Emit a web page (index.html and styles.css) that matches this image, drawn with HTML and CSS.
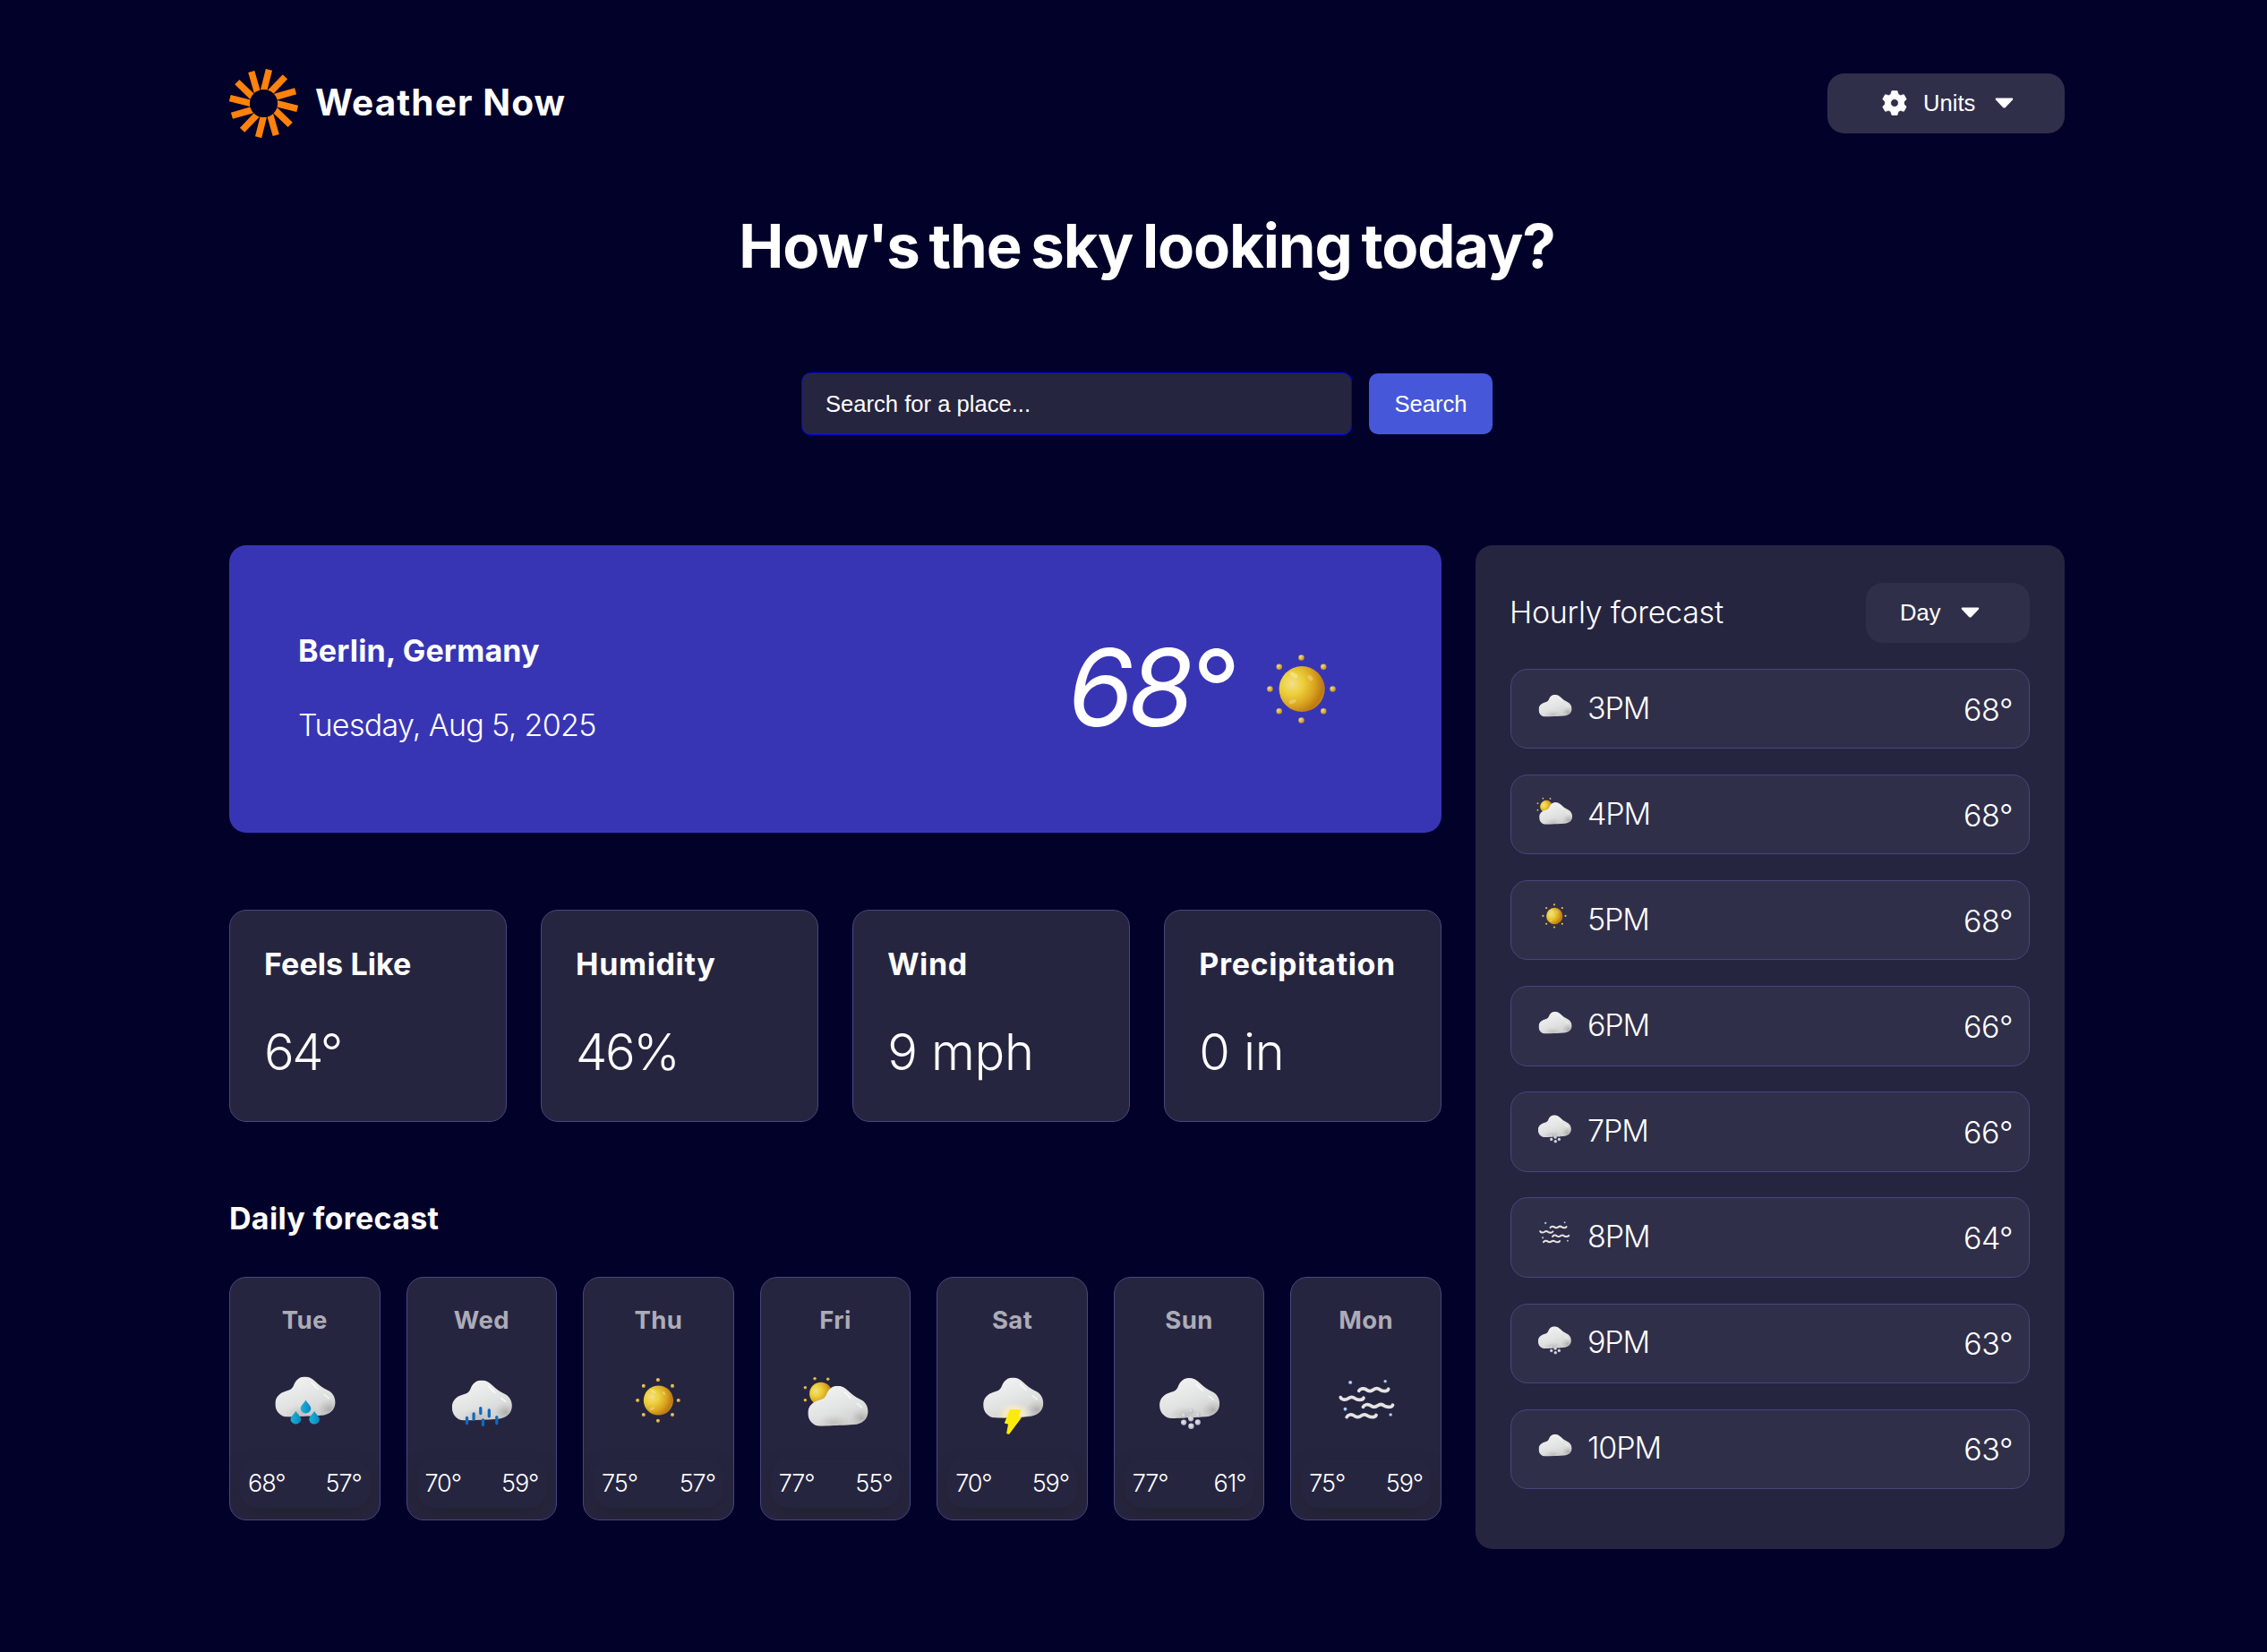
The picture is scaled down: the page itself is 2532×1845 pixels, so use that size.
FILE: index.html
```html
<!DOCTYPE html>
<html lang="en">
<head>
<meta charset="utf-8">
<title>Weather Now</title>
<link rel="stylesheet" href="styles.css">
</head>
<body>
<svg class="sprite" aria-hidden="true">
  <defs>
    <radialGradient id="g-sun" cx="0.28" cy="0.38" r="0.8">
      <stop offset="0" stop-color="#f3df88"/>
      <stop offset="0.3" stop-color="#ecd03c"/>
      <stop offset="0.62" stop-color="#d9a420"/>
      <stop offset="0.85" stop-color="#bd7a14"/>
      <stop offset="1" stop-color="#c98e1c"/>
    </radialGradient>
    <radialGradient id="g-dot" cx="0.35" cy="0.35" r="0.75">
      <stop offset="0" stop-color="#f2dd7c"/>
      <stop offset="1" stop-color="#b98712"/>
    </radialGradient>
    <linearGradient id="g-cloud" x1="0.2" y1="0" x2="0.7" y2="1">
      <stop offset="0" stop-color="#f5f5f5"/>
      <stop offset="0.55" stop-color="#e2e3e3"/>
      <stop offset="1" stop-color="#cbcbc9"/>
    </linearGradient>
    <radialGradient id="g-shade">
      <stop offset="0" stop-color="#a4a4a4" stop-opacity="0.8"/>
      <stop offset="1" stop-color="#bdbdbd" stop-opacity="0"/>
    </radialGradient>
    <radialGradient id="g-glow">
      <stop offset="0" stop-color="#fff0a0"/>
      <stop offset="0.5" stop-color="#fdf1c4" stop-opacity="0.8"/>
      <stop offset="1" stop-color="#f5efd8" stop-opacity="0"/>
    </radialGradient>
    <linearGradient id="g-drop" x1="0" y1="0" x2="1" y2="0">
      <stop offset="0" stop-color="#17b3dd"/>
      <stop offset="1" stop-color="#0f86bb"/>
    </linearGradient>
    <radialGradient id="g-snow" cx="0.4" cy="0.4" r="0.7">
      <stop offset="0" stop-color="#e6e8ee"/>
      <stop offset="1" stop-color="#a9acb8"/>
    </radialGradient>
    <radialGradient id="g-mist" cx="0.4" cy="0.4" r="0.7">
      <stop offset="0" stop-color="#c9e0fa"/>
      <stop offset="1" stop-color="#7ba3d6"/>
    </radialGradient>
    <clipPath id="c-cloud"><path d="M39.8 15C34 15 30 19 28 24C26.5 28 24 30 19.4 31C12 33 7.1 38 7.1 45.3C7.1 54 13 60 21 60C29 60 38 59 44 59C49 59 53 58.6 58 58.3C67.5 58 74.1 52 74.1 43.7C74.1 37.5 71 32.5 65.4 30C60 27.3 56 24.5 52 20.5C48 16.8 44.5 15 39.8 15Z"/></clipPath>
  </defs>
  <symbol id="cloud" viewBox="0 0 80 80" overflow="visible">
    <g clip-path="url(#c-cloud)">
      <rect x="5" y="13" width="72" height="50" fill="url(#g-cloud)"/>
      <ellipse cx="67" cy="51" rx="13" ry="11" fill="url(#g-shade)"/>
      <ellipse cx="36" cy="56" rx="18" ry="9" fill="url(#g-shade)" opacity="0.6"/>
      <path d="M48 22L55 29M62 35l5 4" stroke="#fff" stroke-width="1.6" stroke-linecap="round" opacity="0.75"/>
    </g>
  </symbol>
  <symbol id="i-sun" viewBox="0 0 80 80">
    <circle cx="40.4" cy="40" r="16.6" fill="url(#g-sun)"/>
    <ellipse cx="34.5" cy="29.8" rx="3.2" ry="1.6" transform="rotate(35 34.5 29.8)" fill="#fbf0b8" opacity="0.45"/>
    <ellipse cx="46.5" cy="32" rx="2.4" ry="1.4" transform="rotate(50 46.5 32)" fill="#fbf0b8" opacity="0.35"/>
    <ellipse cx="33.5" cy="49.2" rx="2.8" ry="1.5" transform="rotate(-20 33.5 49.2)" fill="#f8dfa0" opacity="0.45"/>
    <g fill="url(#g-dot)">
      <circle cx="40" cy="17.2" r="2.1"/><circle cx="40" cy="62.8" r="2.1"/>
      <circle cx="17.2" cy="40" r="2.1"/><circle cx="62.8" cy="40" r="2.1"/>
      <circle cx="23.9" cy="23.9" r="2.1"/><circle cx="56.1" cy="23.9" r="2.1"/>
      <circle cx="23.9" cy="56.1" r="2.1"/><circle cx="56.1" cy="56.1" r="2.1"/>
    </g>
  </symbol>
  <symbol id="i-overcast" viewBox="0 0 80 80">
    <use href="#cloud" x="1.2" y="4.5" width="80" height="80"/>
  </symbol>
  <symbol id="i-partly" viewBox="0 0 80 80">
    <circle cx="23.8" cy="32.4" r="12.7" fill="url(#g-sun)"/>
    <g fill="url(#g-dot)">
      <circle cx="17.1" cy="15.7" r="1.8"/><circle cx="31.8" cy="16.3" r="1.8"/>
      <circle cx="6.4" cy="25.7" r="1.8"/><circle cx="6.4" cy="39.7" r="1.8"/>
    </g>
    <use href="#cloud" x="2.3" y="8.7" width="80" height="80"/>
  </symbol>
  <symbol id="i-rain" viewBox="0 0 80 80">
    <use href="#cloud" x="0.3" y="-1.5" width="80" height="80"/>
    <g fill="url(#g-drop)">
      <path d="M41.5 39.5C43 43 47.3 45.5 47.3 49a5.8 5.4 0 0 1-11.6 0C35.7 45.5 40 43 41.5 39.5Z"/>
      <path d="M30.4 51.8C32 55.2 36.2 57.7 36.2 61.2a5.8 5.2 0 0 1-11.6 0C24.6 57.7 29 55.2 30.4 51.8Z"/>
      <path d="M51.1 51.8C52.6 55.2 56.9 57.7 56.9 61.2a5.8 5.2 0 0 1-11.6 0C45.3 57.7 49.6 55.2 51.1 51.8Z"/>
    </g>
  </symbol>
  <symbol id="i-drizzle" viewBox="0 0 80 80">
    <use href="#cloud" x="-0.3" y="2.4" width="80" height="80"/>
    <path d="M23.5 59.5v6M31.1 55v6.3M38.8 48.6v6M48.3 50.8v7M41.4 61.8v5.6M56.8 58.6v7" stroke="#1169bd" stroke-width="3.3" stroke-linecap="round"/>
  </symbol>
  <symbol id="i-storm" viewBox="0 0 80 80">
    <use href="#cloud" x="0.1" y="-0.5" width="80" height="80"/>
    <g clip-path="url(#c-cloud)"><ellipse cx="41" cy="56" rx="21" ry="14" fill="url(#g-glow)"/></g>
    <path d="M37.6 50.6L48.4 50.9L45.8 58.8L49 59.4L35.8 77L33.9 76.6L35.8 66.2L31.7 65Z" fill="#fdea0c" stroke="#fdea0c" stroke-width="1.4" stroke-linejoin="round"/>
  </symbol>
  <symbol id="i-snow" viewBox="0 0 80 80">
    <use href="#cloud" x="0" y="0" width="80" height="80"/>
    <g fill="url(#g-snow)">
      <circle cx="42.1" cy="51.7" r="2.8" opacity="0.8"/>
      <circle cx="34.1" cy="56.7" r="2.9" opacity="0.9"/><circle cx="49.8" cy="56.2" r="2.9" opacity="0.9"/>
      <circle cx="42.1" cy="60.3" r="3.1"/><circle cx="34.1" cy="64.6" r="3.1"/>
      <circle cx="49.8" cy="64.4" r="3.1"/><circle cx="42.4" cy="68.7" r="3.2"/>
    </g>
  </symbol>
  <symbol id="i-fog" viewBox="0 0 80 80">
    <g fill="none" stroke="#e6e4e2" stroke-width="3.7" stroke-linecap="round" stroke-linejoin="round">
      <path d="M31.8 29.3C33 26.6 37.5 26 40 28C42.5 30 45.5 30 48 28C50.5 26 53 26.2 55.3 28C58 30.2 63.8 30.2 64.6 27.4"/>
      <path d="M11.3 36.6C12.5 39.8 17.5 39.6 20 37.8C22.3 36 25 36 27.3 37.8C30.5 40 35.8 40 37 37.2"/>
      <path d="M36.5 47.3C37.7 44.4 42.2 43.8 44.8 45.8C47.3 47.8 50.2 47.8 52.8 45.8C55.2 44 57.8 44.2 60 46C62.8 48 68.6 48 69.5 45.2"/>
      <path d="M18.2 58.6C19.4 55.7 23.9 55.1 26.4 57.1C28.9 59.1 31.9 59.1 34.4 57.1C36.8 55.3 39.4 55.5 41.6 57.3C44.4 59.3 50.2 59.3 51 56.5"/>
    </g>
    <g fill="url(#g-mist)">
      <circle cx="22.2" cy="20" r="2.1"/><circle cx="61.2" cy="18.8" r="1.8"/>
      <circle cx="16.5" cy="49.7" r="2"/><circle cx="67.2" cy="56" r="1.8"/>
    </g>
  </symbol>
  <symbol id="caret" viewBox="0 0 20 12">
    <path d="M1.5 0.5h17c1.2 0 1.7 1.3 0.9 2.1L11.4 10.9a2 2 0 0 1-2.8 0L0.6 2.6C-0.2 1.8 0.3 0.5 1.5 0.5Z"/>
  </symbol>
</svg>

<div class="page">
  <header class="top">
    <div class="brand">
      <svg class="brand__mark" viewBox="-38.5 -38.5 77 77" aria-hidden="true">
        <g fill="#ff820a">
          <rect x="-7.1" y="-38" width="7.4" height="24" transform="rotate(14)"/>
          <rect x="-7.1" y="-38" width="7.4" height="24" transform="rotate(44)"/>
          <rect x="-7.1" y="-38" width="7.4" height="24" transform="rotate(74)"/>
          <rect x="-7.1" y="-38" width="7.4" height="24" transform="rotate(104)"/>
          <rect x="-7.1" y="-38" width="7.4" height="24" transform="rotate(134)"/>
          <rect x="-7.1" y="-38" width="7.4" height="24" transform="rotate(164)"/>
          <rect x="-7.1" y="-38" width="7.4" height="24" transform="rotate(194)"/>
          <rect x="-7.1" y="-38" width="7.4" height="24" transform="rotate(224)"/>
          <rect x="-7.1" y="-38" width="7.4" height="24" transform="rotate(254)"/>
          <rect x="-7.1" y="-38" width="7.4" height="24" transform="rotate(284)"/>
          <rect x="-7.1" y="-38" width="7.4" height="24" transform="rotate(314)"/>
          <rect x="-7.1" y="-38" width="7.4" height="24" transform="rotate(344)"/>
        </g>
        <circle class="brand__core" r="15.6"/>
      </svg>
      <span class="brand__name">Weather Now</span>
    </div>
    <button class="menu menu--units">
      <svg class="menu__gear" viewBox="-14 -14 28 28" aria-hidden="true">
        <path fill="#fff" fill-rule="evenodd" stroke="#fff" stroke-width="0.8" stroke-linejoin="round" d="M-3-13.4H3L4.2-9.6A10 10 0 0 1 6.4-8.3L10.4-9.3L13.2-4.3L10.5-1.3A10 10 0 0 1 10.5 1.3L13.2 4.3L10.4 9.3L6.4 8.3A10 10 0 0 1 4.2 9.6L3 13.4H-3L-4.2 9.6A10 10 0 0 1-6.4 8.3L-10.4 9.3L-13.2 4.3L-10.5 1.3A10 10 0 0 1-10.5-1.3L-13.2-4.3L-10.4-9.3L-6.4-8.3A10 10 0 0 1-4.2-9.6ZM0-4.4A4.4 4.4 0 1 0 0 4.4A4.4 4.4 0 1 0 0-4.4Z"/>
      </svg>
      <span class="menu__text">Units</span>
      <svg class="menu__caret"><use href="#caret"/></svg>
    </button>
  </header>

  <h1 class="title">How's the sky looking today?</h1>

  <form class="search">
    <input class="search__field" type="text" placeholder="Search for a place...">
    <button class="search__button" type="button">Search</button>
  </form>

  <main class="board">
    <div class="overview">
      <section class="hero">
        <div class="hero__place">
          <h2 class="hero__city">Berlin, Germany</h2>
          <p class="hero__date">Tuesday, Aug 5, 2025</p>
        </div>
        <div class="hero__now">
          <span class="hero__temp">68°</span>
          <svg class="hero__icon"><use href="#i-sun"/></svg>
        </div>
      </section>

      <section class="stats">
        <div class="stat"><h3 class="stat__label stat__label--pair">Feels Like</h3><p class="stat__value">64°</p></div>
        <div class="stat"><h3 class="stat__label">Humidity</h3><p class="stat__value">46%</p></div>
        <div class="stat"><h3 class="stat__label">Wind</h3><p class="stat__value stat__value--unit">9 mph</p></div>
        <div class="stat"><h3 class="stat__label">Precipitation</h3><p class="stat__value stat__value--unit">0 in</p></div>
      </section>

      <h2 class="daily-title">Daily forecast</h2>
      <section class="daily">
        <div class="day"><h3 class="day__name">Tue</h3><svg class="day__icon"><use href="#i-rain"/></svg><div class="day__range"><span>68°</span><span>57°</span></div></div>
        <div class="day"><h3 class="day__name">Wed</h3><svg class="day__icon"><use href="#i-drizzle"/></svg><div class="day__range"><span>70°</span><span>59°</span></div></div>
        <div class="day"><h3 class="day__name">Thu</h3><svg class="day__icon"><use href="#i-sun"/></svg><div class="day__range"><span>75°</span><span>57°</span></div></div>
        <div class="day"><h3 class="day__name">Fri</h3><svg class="day__icon"><use href="#i-partly"/></svg><div class="day__range"><span>77°</span><span>55°</span></div></div>
        <div class="day"><h3 class="day__name">Sat</h3><svg class="day__icon"><use href="#i-storm"/></svg><div class="day__range"><span>70°</span><span>59°</span></div></div>
        <div class="day"><h3 class="day__name">Sun</h3><svg class="day__icon"><use href="#i-snow"/></svg><div class="day__range"><span>77°</span><span>61°</span></div></div>
        <div class="day"><h3 class="day__name">Mon</h3><svg class="day__icon"><use href="#i-fog"/></svg><div class="day__range"><span>75°</span><span>59°</span></div></div>
      </section>
    </div>

    <aside class="hourly">
      <div class="hourly__head">
        <h2 class="hourly__title">Hourly forecast</h2>
        <button class="menu menu--day">
          <span class="menu__text">Day</span>
          <svg class="menu__caret"><use href="#caret"/></svg>
        </button>
      </div>
      <ul class="hours">
        <li class="hour"><svg class="hour__icon"><use href="#i-overcast"/></svg><span class="hour__time">3PM</span><span class="hour__temp">68°</span></li>
        <li class="hour"><svg class="hour__icon"><use href="#i-partly"/></svg><span class="hour__time">4PM</span><span class="hour__temp">68°</span></li>
        <li class="hour"><svg class="hour__icon"><use href="#i-sun"/></svg><span class="hour__time">5PM</span><span class="hour__temp">68°</span></li>
        <li class="hour"><svg class="hour__icon"><use href="#i-overcast"/></svg><span class="hour__time">6PM</span><span class="hour__temp">66°</span></li>
        <li class="hour"><svg class="hour__icon"><use href="#i-snow"/></svg><span class="hour__time">7PM</span><span class="hour__temp">66°</span></li>
        <li class="hour"><svg class="hour__icon"><use href="#i-fog"/></svg><span class="hour__time">8PM</span><span class="hour__temp">64°</span></li>
        <li class="hour"><svg class="hour__icon"><use href="#i-snow"/></svg><span class="hour__time">9PM</span><span class="hour__temp">63°</span></li>
        <li class="hour"><svg class="hour__icon"><use href="#i-overcast"/></svg><span class="hour__time">10PM</span><span class="hour__temp">63°</span></li>
      </ul>
    </aside>
  </main>
</div>
</body>
</html>
```
FILE: styles.css
```css
:root {
  --night: #02012a;
  --panel: #262540;
  --raised: #302f4a;
  --line: #48467c;
  --sans: Inter, "Open Sans", sans-serif;
  --ui: "Liberation Sans", Arial, sans-serif;
}

* { box-sizing: border-box; }

body {
  margin: 0;
  background: var(--night);
  color: #fff;
  font-family: var(--sans);
}

h1, h2, h3, p, ul { margin: 0; padding: 0; }
ul { list-style: none; }
svg { display: block; flex: none; }

.sprite { position: absolute; width: 0; height: 0; }

.page {
  min-height: 1845px;
  padding: 77px 226px 0 256px;
}

/* Header */
.top {
  display: flex;
  align-items: center;
  justify-content: space-between;
  height: 77px;
}
.brand { display: flex; align-items: center; gap: 19px; }
.brand__mark { width: 77px; height: 77px; }
.brand__core { fill: var(--night); }
.brand__name {
  margin-bottom: 2px;
  font-size: 40.5px;
  font-weight: 680;
  letter-spacing: 1.1px;
  line-height: 48px;
}

.menu {
  display: flex;
  align-items: center;
  height: 67px;
  padding: 0;
  border: 0;
  border-radius: 19px;
  background: var(--raised);
  color: #fff;
  font: 25.6px/30px var(--ui);
}
.menu--units { width: 265px; padding-left: 61px; }
.menu--day { width: 183px; padding-left: 38px; }
.menu__text { margin-bottom: 2px; }
.menu__gear { width: 28px; height: 28px; margin: 0 18px 2px 0; }
.menu__caret { width: 21px; height: 12px; margin: 0 0 2px 22px; fill: #fff; }

/* Heading and search */
.title {
  margin-top: 76px;
  font-size: 67px;
  font-weight: 700;
  letter-spacing: -1.1px;
  line-height: 90px;
  text-align: center;
  word-spacing: -4px;
}
.search {
  display: flex;
  align-items: center;
  justify-content: center;
  gap: 19px;
  margin-top: 96px;
}
.search__field {
  width: 615px;
  height: 70px;
  padding: 0 26px;
  border: 1px solid blue;
  border-radius: 10px;
  background: var(--panel);
  color: #fff;
  font: 25.6px var(--ui);
}
.search__field::placeholder { color: #fff; opacity: 1; }
.search__button {
  width: 138px;
  height: 68px;
  padding: 0;
  border: 0;
  border-radius: 10px;
  background: #4658d9;
  color: #fff;
  font: 25.6px var(--ui);
}

/* Dashboard */
.board {
  display: grid;
  grid-template-columns: 1354px 658px;
  justify-content: space-between;
  align-items: start;
  margin-top: 123px;
}

.hero {
  display: flex;
  align-items: center;
  justify-content: space-between;
  height: 321px;
  padding: 0 95px 0 77px;
  border-radius: 19px;
  background: #3835b5;
}
.hero__place { display: grid; gap: 39px; margin-bottom: 2px; }
.hero__city { font-size: 34px; font-weight: 650; letter-spacing: 0.2px; line-height: 44px; }
.hero__date { font-size: 34px; font-weight: 350; letter-spacing: -0.65px; line-height: 44px; }
.hero__now { display: flex; align-items: center; gap: 18px; }
.hero__temp {
  margin-bottom: 3px;
  font-size: 119px;
  font-style: italic;
  font-weight: 390;
  letter-spacing: -6px;
  line-height: 120px;
}
.hero__icon { width: 123px; height: 123px; }

.stats {
  display: grid;
  grid-template-columns: repeat(4, 1fr);
  gap: 38.4px;
  margin-top: 86px;
}
.stat {
  height: 237px;
  padding: 38px 38px 0;
  border: 1px solid var(--line);
  border-radius: 19px;
  background: var(--panel);
}
.stat__label {
  font-size: 34px;
  font-weight: 650;
  letter-spacing: 0.65px;
  line-height: 44px;
  white-space: nowrap;
}
.stat__label--pair { letter-spacing: 0.1px; }
.stat__value {
  margin-top: 41px;
  font-size: 56px;
  font-weight: 350;
  letter-spacing: -2.4px;
  line-height: 70px;
}
.stat__value--unit { letter-spacing: -0.3px; }

.daily-title {
  margin-top: 86px;
  font-size: 34px;
  font-weight: 650;
  letter-spacing: 0.3px;
  line-height: 44px;
}
.daily {
  display: grid;
  grid-template-columns: repeat(7, 1fr);
  gap: 28.8px;
  margin-top: 43px;
}
.day {
  display: flex;
  flex-direction: column;
  align-items: center;
  height: 272px;
  padding: 29px 11px 0;
  border: 1px solid var(--line);
  border-radius: 19px;
  background: var(--panel);
  overflow: hidden;
}
.day__name {
  color: #acacb7;
  font-size: 27.5px;
  font-weight: 650;
  letter-spacing: 0.4px;
  line-height: 36px;
}
.day__icon { width: 80px; height: 80px; margin-top: 32px; }
.day__range {
  display: flex;
  justify-content: space-between;
  align-self: stretch;
  height: 54px;
  margin-top: 26px;
  padding: 0 9px;
  border-radius: 19px;
  box-shadow: 0 8px 20px rgba(32, 32, 32, 0.45);
  background: var(--panel);
  font-size: 27px;
  font-weight: 350;
  letter-spacing: -1.1px;
  line-height: 54px;
}

/* Hourly panel */
.hourly {
  height: 1121px;
  padding: 42px 39px 0;
  border-radius: 19px;
  background: var(--panel);
}
.hourly__head {
  display: flex;
  align-items: center;
  justify-content: space-between;
}
.hourly__title {
  margin: 0 0 1px -1px;
  font-size: 34px;
  font-weight: 350;
  letter-spacing: -0.25px;
  line-height: 44px;
}
.hours { display: grid; gap: 28.8px; margin-top: 29px; }
.hour {
  display: flex;
  align-items: center;
  height: 89.3px;
  padding: 0 18px 0 26px;
  border: 1px solid var(--line);
  border-radius: 19px;
  background: var(--raised);
  font-size: 34px;
  font-weight: 350;
  letter-spacing: -0.5px;
  line-height: 44px;
}
.hour__icon { width: 44px; height: 44px; margin: 0 15px 10px 0; }
.hour__time { margin-bottom: 2px; letter-spacing: -1.1px; }
.hour__temp { margin: 2px 0 0 auto; }
```
